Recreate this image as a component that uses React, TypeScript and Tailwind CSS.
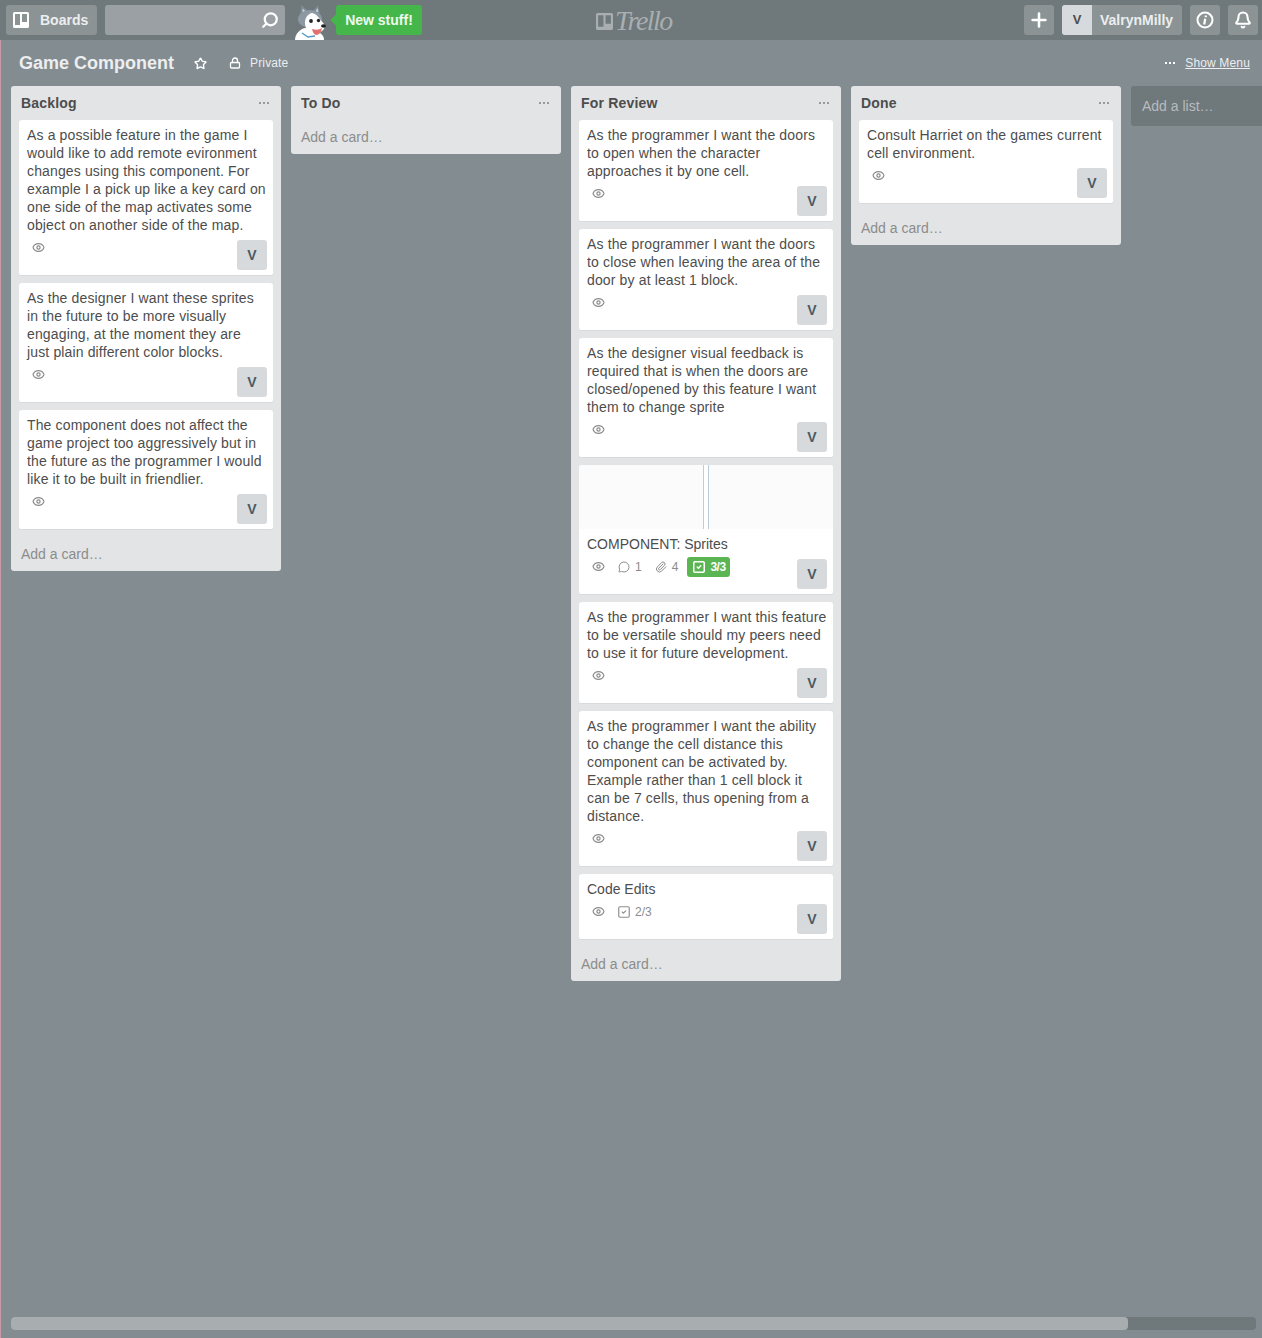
import { Bell, Eye, Lock, MessageCircle, Paperclip, Plus, Search, SquareCheck, Star } from "lucide-react";

type CardData = {
  text: string;
  cover?: boolean;
  comments?: number;
  attachments?: number;
  checklist?: string;
  checklistDone?: boolean;
};

type ListData = {
  title: string;
  cards: CardData[];
};

// line breaks are kept as they fall in the board
const lists: ListData[] = [
  {
    title: "Backlog",
    cards: [
      {
        text: "As a possible feature in the game I\nwould like to add remote evironment\nchanges using this component. For\nexample I a pick up like a key card on\none side of the map activates some\nobject on another side of the map.",
      },
      {
        text: "As the designer I want these sprites\nin the future to be more visually\nengaging, at the moment they are\njust plain different color blocks.",
      },
      {
        text: "The component does not affect the\ngame project too aggressively but in\nthe future as the programmer I would\nlike it to be built in friendlier.",
      },
    ],
  },
  { title: "To Do", cards: [] },
  {
    title: "For Review",
    cards: [
      { text: "As the programmer I want the doors\nto open when the character\napproaches it by one cell." },
      { text: "As the programmer I want the doors\nto close when leaving the area of the\ndoor by at least 1 block." },
      {
        text: "As the designer visual feedback is\nrequired that is when the doors are\nclosed/opened by this feature I want\nthem to change sprite",
      },
      {
        text: "COMPONENT: Sprites",
        cover: true,
        comments: 1,
        attachments: 4,
        checklist: "3/3",
        checklistDone: true,
      },
      {
        text: "As the programmer I want this feature\nto be versatile should my peers need\nto use it for future development.",
      },
      {
        text: "As the programmer I want the ability\nto change the cell distance this\ncomponent can be activated by.\nExample rather than 1 cell block it\ncan be 7 cells, thus opening from a\ndistance.",
      },
      { text: "Code Edits", checklist: "2/3" },
    ],
  },
  {
    title: "Done",
    cards: [{ text: "Consult Harriet on the games current\ncell environment." }],
  },
];

function Dots({ className }: { className: string }) {
  return (
    <div className={`flex gap-[2px] ${className}`}>
      <span className="w-[2px] h-[2px] bg-current" />
      <span className="w-[2px] h-[2px] bg-current" />
      <span className="w-[2px] h-[2px] bg-current" />
    </div>
  );
}

function BoardsIcon({ size, fill }: { size: number; fill: string }) {
  return (
    <svg width={size} height={size} viewBox="0 0 16 16">
      <path
        fillRule="evenodd"
        fill={fill}
        d="M1.5 0h13A1.5 1.5 0 0 1 16 1.5v13a1.5 1.5 0 0 1-1.500 1.500h-13A1.500 1.500 0 0 1 0 14.500v-13A1.500 1.500 0 0 1 1.500 0zM2 2v11h5V2zM9 2v8h5V2z"
      />
    </svg>
  );
}

function InfoIcon() {
  return (
    <svg width="18" height="18" viewBox="0 0 18 18" fill="none" stroke="#fff">
      <circle cx="9" cy="9" r="7.500" strokeWidth="2" />
      <path d="M9.800 4.500v1.800M9.200 7.800 8.200 13.500" strokeWidth="2.200" />
    </svg>
  );
}

function Husky() {
  return (
    <svg width="37" height="40" viewBox="0 0 37 40">
      <path d="M6 22 L8.500 5 L15 11 L20 11 L25 5 L28 20 Z" fill="#7f8d98" />
      <path d="M9.500 12 L9.800 8.500 L12.500 11.500 Z" fill="#ccd3d8" />
      <path d="M22.500 11.500 L24.500 8 L25.500 12 Z" fill="#ccd3d8" />
      <ellipse cx="17" cy="19" rx="12" ry="9" fill="#8c99a3" />
      <path d="M13 28 C10 20 14 14 19 13 C24 14 26 18 31 24 C33 28 30 31 26 33 L15 34 Z" fill="#fff" />
      <path d="M2 40 C2 34 7 29 12 28 L27 33 C30 35 31 37 31 40 Z" fill="#fff" />
      <path d="M9 33 L15 37 L22 36" stroke="#5a9bc4" strokeWidth="1.500" fill="none" />
      <circle cx="18" cy="21" r="1.900" fill="#222" />
      <circle cx="25.500" cy="20.500" r="1.700" fill="#222" />
      <ellipse cx="30.500" cy="26" rx="2.500" ry="1.800" fill="#222" />
      <path d="M19 29 Q25 31 29 28 Q28 35 23 35 Q20 34 19 29 Z" fill="#e0716f" />
    </svg>
  );
}

function Card({ card }: { card: CardData }) {
  const long = card.text.includes("\n");
  return (
    <div className="mb-[7px] bg-white rounded-[3px] border-b border-[#d6dadc] overflow-hidden">
      {card.cover && (
        <div className="h-[64px] bg-[#fbfbfb] flex justify-center">
          <div className="w-[6px] ml-[-1px] border-x border-[#bccddb] bg-white" />
        </div>
      )}
      <div
        className={`pt-[6px] pl-[8px] pr-[5px] text-[14px] leading-[18px] whitespace-pre-line text-[#4d4d4d] ${
          long ? "tracking-[0.14px]" : ""
        }`}
      >
        {card.text}
      </div>
      <div className="h-[41px] flex justify-between pl-[13px] pr-[6px] text-[12px] text-[#8c8c8c]">
        <div className="flex items-center h-[27px] gap-[13px]">
          <Eye size={13} strokeWidth={2.200} />
          {card.comments !== undefined && (
            <div className="flex items-center gap-[5px]">
              <MessageCircle size={12} strokeWidth={2} />
              <span>{card.comments}</span>
            </div>
          )}
          {card.attachments !== undefined && (
            <div className="flex items-center gap-[5px]">
              <Paperclip size={12} strokeWidth={2} />
              <span>{card.attachments}</span>
            </div>
          )}
          {card.checklist &&
            (card.checklistDone ? (
              <div className="flex items-center gap-[4px] h-[20px] w-[43px] pl-[5px] ml-[-4px] rounded-[3px] bg-[#5ab552] font-bold text-white">
                <SquareCheck size={14} strokeWidth={2.600} />
                <span className="tracking-[-0.5px]">{card.checklist}</span>
              </div>
            ) : (
              <div className="flex items-center gap-[4px] ml-[-1px]">
                <SquareCheck size={14} strokeWidth={2} />
                <span>{card.checklist}</span>
              </div>
            ))}
        </div>
        <div className="mt-[6px] w-[30px] h-[30px] rounded-[3px] bg-[#d6dadc] flex items-center justify-center text-[14px] font-bold text-[#4d5a63]">
          V
        </div>
      </div>
    </div>
  );
}

function List({ list }: { list: ListData }) {
  return (
    <div className="w-[270px] shrink-0 self-start bg-[#e2e4e6] rounded-[3px]">
      <div className="h-[34px] flex items-center justify-between pl-[10px] pr-[12px] text-[14px] font-bold tracking-[0.2px] text-[#4d4d4d]">
        <span>{list.title}</span>
        <Dots className="text-[#999]" />
      </div>
      <div className="px-[8px]">
        {list.cards.map((card, i) => (
          <Card key={i} card={card} />
        ))}
      </div>
      <div className="h-[34px] flex items-center pl-[10px] text-[14px] text-[#8c8c8c]">Add a card…</div>
    </div>
  );
}

export default function App() {
  return (
    <div className="w-[1262px] h-[1338px] flex flex-col overflow-hidden bg-[#838c91] font-['Liberation_Sans',Arial,sans-serif]">
      <header className="relative h-[40px] shrink-0 flex items-center bg-[#6f787b] pl-[6px] pr-[4px]">
        <div className="w-[91px] h-[30px] rounded-[3px] bg-white/20 flex items-center pl-[7px] gap-[11px] text-[14px] font-bold text-[#eceeef]">
          <BoardsIcon size={16} fill="#fff" />
          <span>Boards</span>
        </div>
        <div className="ml-[8px] w-[180px] h-[30px] rounded-[3px] bg-white/30 flex items-center justify-end pr-[6px] text-white">
          <Search size={18} strokeWidth={3} className="-scale-x-100" />
        </div>
        <div className="ml-[8px] h-[40px]">
          <Husky />
        </div>
        <div className="relative ml-[6px] w-[86px] h-[30px] rounded-[3px] bg-[#45b649] flex items-center justify-center text-[14px] font-bold text-[#eef9ee]">
          <span className="absolute left-[-4px] top-[11px] w-[8px] h-[8px] rotate-45 bg-[#45b649]" />
          <span className="relative">New stuff!</span>
        </div>
        <div className="flex-1" />
        <div className="w-[30px] h-[30px] rounded-[3px] bg-white/20 flex items-center justify-center text-white">
          <Plus size={22} strokeWidth={2.800} />
        </div>
        <div className="ml-[8px] w-[120px] h-[30px] rounded-[3px] bg-white/20 flex items-center overflow-hidden">
          <div className="w-[30px] h-[30px] bg-[#d6dadc] flex items-center justify-center text-[13px] font-bold text-[#4d4d4d]">
            V
          </div>
          <span className="ml-[8px] text-[14px] font-bold text-[#eceeef]">ValrynMilly</span>
        </div>
        <div className="ml-[8px] w-[30px] h-[30px] rounded-[3px] bg-white/20 flex items-center justify-center">
          <InfoIcon />
        </div>
        <div className="ml-[8px] w-[30px] h-[30px] rounded-[3px] bg-white/20 flex items-center justify-center text-white">
          <Bell size={18} strokeWidth={2.800} />
        </div>
        <div className="absolute left-[596px] top-[11px] flex items-center gap-[2px] text-[#a9aeb0]">
          <BoardsIcon size={17} fill="#a9aeb0" />
          <span className="font-['Liberation_Serif',serif] italic text-[28px] leading-[20px] tracking-[-1.500px]">Trello</span>
        </div>
      </header>

      <main className="flex-1 min-h-0 flex flex-col border-l border-[#c99aa5]">
        <div className="h-[46px] shrink-0 flex items-center pl-[18px] pr-[12px] text-white">
          <h1 className="text-[18px] font-bold text-[#eceeef]">Game Component</h1>
          <Star size={13} strokeWidth={2.600} className="ml-[20px]" />
          <Lock size={12} strokeWidth={2.600} className="ml-[22px]" />
          <span className="ml-[9px] text-[12px] tracking-[0.15px] text-[#eceeef]">Private</span>
          <div className="flex-1" />
          <Dots className="text-white" />
          <span className="ml-[10px] text-[12px] underline tracking-[0.15px] text-[#eceeef]">Show Menu</span>
        </div>

        <div className="flex-1 min-h-0 flex gap-[10px] pl-[10px] overflow-hidden">
          {lists.map((list) => (
            <List key={list.title} list={list} />
          ))}
          <div className="w-[270px] h-[40px] shrink-0 rounded-[3px] bg-[#6f787b] flex items-center pl-[11px] text-[14px] text-[#b7bcbf]">
            Add a list…
          </div>
        </div>

        <div className="h-[13px] shrink-0 mb-[8px] ml-[10px] mr-[6px] rounded-[4px] bg-[#6f787b]">
          <div className="w-[1117px] h-[13px] rounded-[4px] bg-[#a8adb0]" />
        </div>
      </main>
    </div>
  );
}
